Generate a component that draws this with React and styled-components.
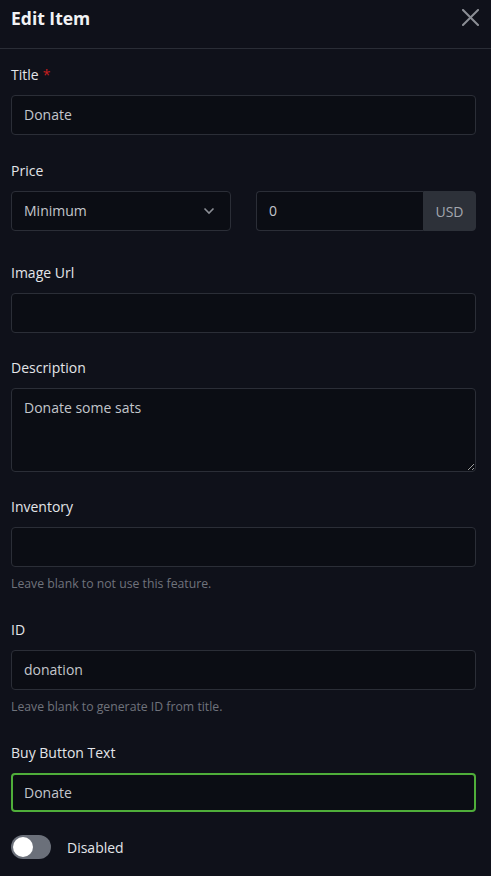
import React from "react";
import styled, { createGlobalStyle } from "styled-components";

const Global = createGlobalStyle`
  html, body { margin: 0; padding: 0; background: #0f111a; }
  body { font-family: "Open Sans", "Noto Sans", sans-serif; color: #e3e5e9; }
  * { box-sizing: border-box; }
`;

const Panel = styled.div`
  width: 491px;
  min-height: 876px;
  background: #0f111a;
`;

const Header = styled.div`
  height: 49px;
  border-bottom: 1px solid #2a2d36;
  display: flex;
  justify-content: space-between;
  align-items: flex-start;
  padding: 5px 12px 0 11px;
`;

const Heading = styled.h2`
  margin: 0;
  font-size: 17.5px;
  line-height: 26px;
  font-weight: 700;
  color: #f1f2f4;
`;

const CloseButton = styled.button`
  background: none;
  border: none;
  padding: 0;
  margin-top: 3px;
  width: 18px;
  height: 18px;
  display: flex;
  align-items: center;
  justify-content: center;
  cursor: pointer;
`;

const Body = styled.div`
  padding: 16px 15px 16px 11px;
  display: flex;
  flex-direction: column;
`;

const Field = styled.div`
  display: flex;
  flex-direction: column;
  margin-bottom: ${(p) => p.$mb ?? 26}px;
`;

const Label = styled.label`
  font-size: 14px;
  line-height: 20px;
  color: #e3e5e9;
  margin-bottom: 10px;
`;

const Required = styled.span`
  color: #c81e1e;
  margin-left: 4px;
`;

const baseInput = `
  height: 40px;
  background: #0b0d14;
  border: 1px solid #2b2e37;
  border-radius: 4px;
  color: #c3c6cc;
  font-family: "Open Sans", "Noto Sans", sans-serif;
  font-size: 14px;
  line-height: 20px;
  padding: 0 12px 1px;
  outline: none;
`;

const TextInput = styled.input`
  ${baseInput}
  width: 100%;
  height: ${(p) => (p.$focused ? "39px" : "40px")};
  border: ${(p) => (p.$focused ? "2px solid #4fae3a" : "1px solid #2b2e37")};
  padding: ${(p) => (p.$focused ? "0 11px 1px" : "0 12px 1px")};
  caret-color: #d0d2d6;
`;

const TextArea = styled.textarea`
  ${baseInput}
  width: 100%;
  height: 84px;
  padding: 8px 12px;
  line-height: 22px;
  resize: vertical;
  display: block;
`;

const Helper = styled.div`
  font-size: 12.25px;
  line-height: 18px;
  color: #6f737c;
  margin-top: 8px;
`;

const PriceRow = styled.div`
  display: grid;
  grid-template-columns: minmax(0, 1fr) minmax(0, 1fr);
  gap: 25px;
`;

const SelectBox = styled.div`
  ${baseInput}
  display: flex;
  align-items: center;
  justify-content: space-between;
  padding: 0 15px 1px 12px;
`;

const InputGroup = styled.div`
  display: flex;
  height: 40px;
  min-width: 0;
`;

const GroupInput = styled.input`
  ${baseInput}
  flex: 1;
  width: 0;
  min-width: 0;
  border-radius: 4px 0 0 4px;
  border-right: none;
`;

const Addon = styled.div`
  width: 53px;
  flex: none;
  background: #2d3139;
  border: 1px solid #2d3139;
  border-radius: 0 4px 4px 0;
  color: #a3a7ae;
  font-size: 14px;
  display: flex;
  align-items: center;
  justify-content: center;
`;

const ToggleRow = styled.div`
  display: flex;
  align-items: center;
  gap: 16px;
`;

const Track = styled.div`
  width: 40px;
  height: 24px;
  border-radius: 12px;
  background: #6b707a;
  padding: 2px;
  display: flex;
  justify-content: ${(p) => (p.$on ? "flex-end" : "flex-start")};
`;

const Knob = styled.div`
  width: 20px;
  height: 20px;
  border-radius: 50%;
  background: #ffffff;
`;

const ToggleLabel = styled.span`
  font-size: 14px;
  color: #e3e5e9;
`;

export default function App() {
  return (
    <Panel>
      <Global />
      <Header>
        <Heading>Edit Item</Heading>
        <CloseButton aria-label="Close">
          <svg width="17" height="17" viewBox="0 0 17 17">
            <path d="M1 1L16 16M16 1L1 16" stroke="#8b8e95" strokeWidth="2" strokeLinecap="square" />
          </svg>
        </CloseButton>
      </Header>
      <Body>
        <Field>
          <Label>
            Title<Required>*</Required>
          </Label>
          <TextInput defaultValue="Donate" />
        </Field>
        <Field $mb={32}>
          <Label>Price</Label>
          <PriceRow>
            <SelectBox>
              <span>Minimum</span>
              <svg width="12" height="8" viewBox="0 0 12 8">
                <path d="M1.5 1.5L6 6L10.5 1.5" fill="none" stroke="#8b8e95" strokeWidth="1.6" />
              </svg>
            </SelectBox>
            <InputGroup>
              <GroupInput defaultValue="0" />
              <Addon>USD</Addon>
            </InputGroup>
          </PriceRow>
        </Field>
        <Field $mb={25}>
          <Label>Image Url</Label>
          <TextInput defaultValue="" />
        </Field>
        <Field $mb={25}>
          <Label>Description</Label>
          <TextArea defaultValue="Donate some sats" />
        </Field>
        <Field $mb={27}>
          <Label>Inventory</Label>
          <TextInput defaultValue="" />
          <Helper>Leave blank to not use this feature.</Helper>
        </Field>
        <Field $mb={27}>
          <Label>ID</Label>
          <TextInput defaultValue="donation" />
          <Helper>Leave blank to generate ID from title.</Helper>
        </Field>
        <Field $mb={23}>
          <Label>Buy Button Text</Label>
          <TextInput $focused defaultValue="Donate" />
        </Field>
        <ToggleRow>
          <Track>
            <Knob />
          </Track>
          <ToggleLabel>Disabled</ToggleLabel>
        </ToggleRow>
      </Body>
    </Panel>
  );
}
